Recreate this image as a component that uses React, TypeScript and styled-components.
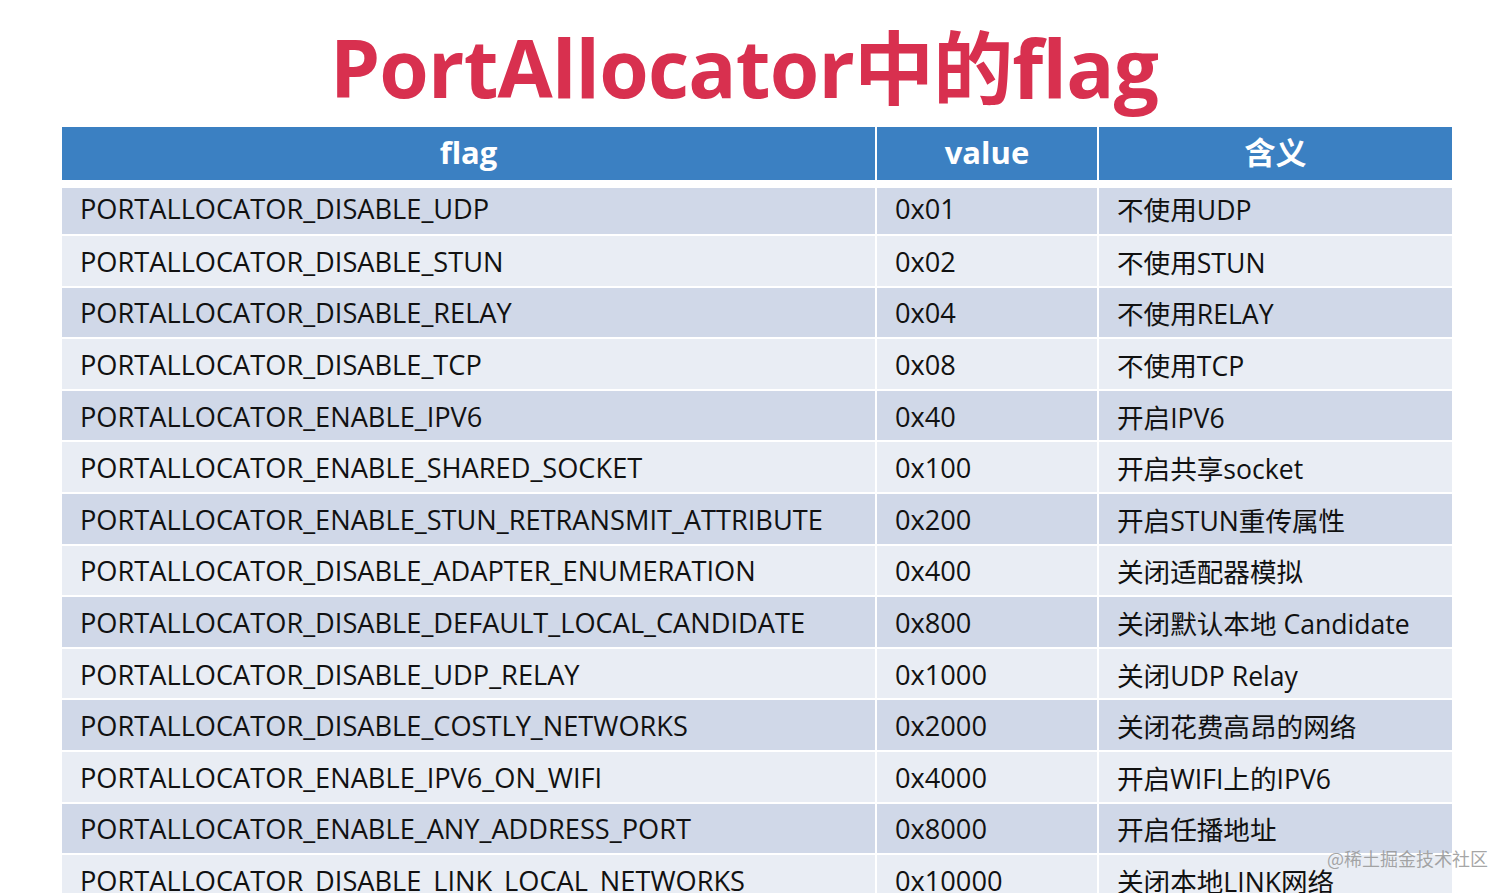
import * as React from "react";
import styled, { createGlobalStyle } from "styled-components";

type FlagRow = {
  flag: string;
  value: string;
  meaning: string;
};

const rows: FlagRow[] = [
  { flag: "PORTALLOCATOR_DISABLE_UDP", value: "0x01", meaning: "不使用UDP" },
  { flag: "PORTALLOCATOR_DISABLE_STUN", value: "0x02", meaning: "不使用STUN" },
  { flag: "PORTALLOCATOR_DISABLE_RELAY", value: "0x04", meaning: "不使用RELAY" },
  { flag: "PORTALLOCATOR_DISABLE_TCP", value: "0x08", meaning: "不使用TCP" },
  { flag: "PORTALLOCATOR_ENABLE_IPV6", value: "0x40", meaning: "开启IPV6" },
  { flag: "PORTALLOCATOR_ENABLE_SHARED_SOCKET", value: "0x100", meaning: "开启共享socket" },
  { flag: "PORTALLOCATOR_ENABLE_STUN_RETRANSMIT_ATTRIBUTE", value: "0x200", meaning: "开启STUN重传属性" },
  { flag: "PORTALLOCATOR_DISABLE_ADAPTER_ENUMERATION", value: "0x400", meaning: "关闭适配器模拟" },
  { flag: "PORTALLOCATOR_DISABLE_DEFAULT_LOCAL_CANDIDATE", value: "0x800", meaning: "关闭默认本地 Candidate" },
  { flag: "PORTALLOCATOR_DISABLE_UDP_RELAY", value: "0x1000", meaning: "关闭UDP Relay" },
  { flag: "PORTALLOCATOR_DISABLE_COSTLY_NETWORKS", value: "0x2000", meaning: "关闭花费高昂的网络" },
  { flag: "PORTALLOCATOR_ENABLE_IPV6_ON_WIFI", value: "0x4000", meaning: "开启WIFI上的IPV6" },
  { flag: "PORTALLOCATOR_ENABLE_ANY_ADDRESS_PORT", value: "0x8000", meaning: "开启任播地址" },
  { flag: "PORTALLOCATOR_DISABLE_LINK_LOCAL_NETWORKS", value: "0x10000", meaning: "关闭本地LINK网络" },
];

const GlobalStyle = createGlobalStyle`
  html, body {
    margin: 0;
    padding: 0;
    background: #ffffff;
    overflow: hidden;
  }
  body {
    font-family: "Open Sans", "Noto Sans CJK SC", sans-serif;
  }
`;

export default function App() {
  return (
    <>
      <GlobalStyle />
      <StyledSlide>
        <StyledTitle>PortAllocator中的flag</StyledTitle>
        <StyledTable>
          <StyledHeadCell>flag</StyledHeadCell>
          <StyledHeadCell>value</StyledHeadCell>
          <StyledHeadCell>含义</StyledHeadCell>
          {rows.map((row, i) => (
            <React.Fragment key={row.flag}>
              <StyledCell $odd={i % 2 === 0} $first={i === 0}>
                {row.flag}
              </StyledCell>
              <StyledCell $odd={i % 2 === 0} $first={i === 0}>
                {row.value}
              </StyledCell>
              <StyledCell $odd={i % 2 === 0} $first={i === 0} $cjk>
                {row.meaning}
              </StyledCell>
            </React.Fragment>
          ))}
        </StyledTable>
        <StyledWatermark>@稀土掘金技术社区</StyledWatermark>
      </StyledSlide>
    </>
  );
}

const StyledSlide = styled.div`
  position: relative;
  width: 1512px;
  height: 893px;
  overflow: hidden;
  padding: 0 60px 0 62px;
  box-sizing: border-box;
`;

const StyledTitle = styled.h1`
  margin: 0;
  padding: 27px 26px 0 0;
  height: 127px;
  box-sizing: border-box;
  text-align: center;
  font-family: "Open Sans", "Noto Sans CJK SC", sans-serif;
  font-weight: 700;
  font-size: 80px;
  line-height: 1;
  letter-spacing: -0.8px;
  color: #d8304f;
  white-space: nowrap;
`;

const StyledTable = styled.div`
  display: grid;
  grid-template-columns: 813px 220px 353px;
  grid-template-rows: 53px 52px;
  grid-auto-rows: 49.6px;
  column-gap: 2px;
  row-gap: 2px;
  width: 1390px;
`;

const StyledHeadCell = styled.div`
  display: flex;
  align-items: center;
  justify-content: center;
  background: #3b80c2;
  color: #ffffff;
  font-family: "Open Sans", "Noto Sans CJK SC", sans-serif;
  font-weight: 700;
  font-size: 31px;
  line-height: 1;
  padding-bottom: 2px;
  box-sizing: border-box;
`;

const StyledCell = styled.div<{ $odd: boolean; $first?: boolean; $cjk?: boolean }>`
  display: flex;
  align-items: center;
  margin-top: ${({ $first }) => ($first ? "6px" : "0")};
  padding: ${({ $first }) => ($first ? "0 0 6px 18px" : "1px 0 0 18px")};
  box-sizing: border-box;
  background: ${({ $odd }) => ($odd ? "#d0d8e8" : "#e9edf4")};
  color: #111111;
  font-family: "Open Sans", "Noto Sans CJK SC", sans-serif;
  font-size: ${({ $cjk }) => ($cjk ? "26.6px" : "27.2px")};
  white-space: nowrap;
`;

const StyledWatermark = styled.div`
  position: absolute;
  right: 24px;
  top: 845px;
  font-family: "Noto Sans CJK SC", sans-serif;
  font-size: 18px;
  color: rgba(150, 150, 150, 0.85);
`;
